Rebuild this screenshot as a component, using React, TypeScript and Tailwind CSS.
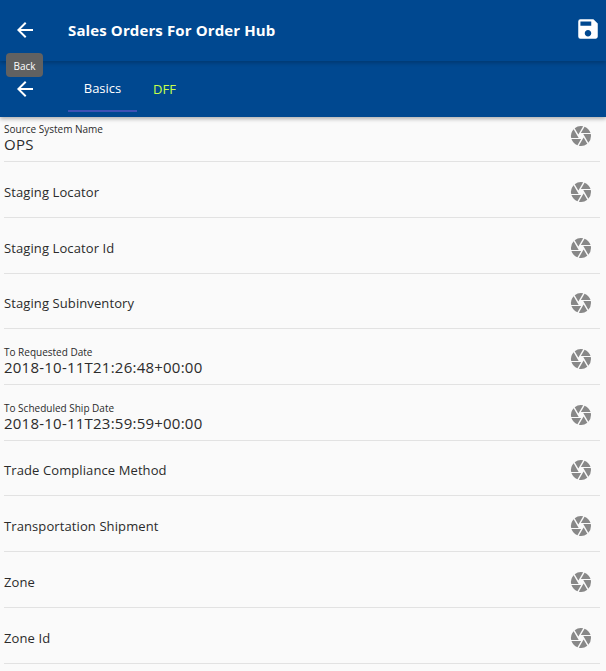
import { MdArrowBack, MdSave, MdCamera } from "react-icons/md";

const rows: { label: string; value?: string; h: string }[] = [
  { label: "Source System Name", value: "OPS", h: "h-[45px] pb-[7px]" },
  { label: "Staging Locator", h: "h-[56px] pt-[4px]" },
  { label: "Staging Locator Id", h: "h-[56px] pt-[4px]" },
  { label: "Staging Subinventory", h: "h-[55px] pt-[4px]" },
  { label: "To Requested Date", value: "2018-10-11T21:26:48+00:00", h: "h-[56px] pt-[4px]" },
  { label: "To Scheduled Ship Date", value: "2018-10-11T23:59:59+00:00", h: "h-[56px] pt-[4px]" },
  { label: "Trade Compliance Method", h: "h-[55px] pt-[4px]" },
  { label: "Transportation Shipment", h: "h-[56px] pt-[4px]" },
  { label: "Zone", h: "h-[56px] pt-[4px]" },
  { label: "Zone Id", h: "h-[56px] pt-[4px]" },
];

export default function App() {
  return (
    <div className="relative w-[606px] h-[671px] overflow-hidden bg-[#fafafa] font-['Open_Sans','Noto_Sans',sans-serif] text-[#2b2b2b]">
      <header className="relative z-10 bg-[#004890] shadow-[0_2px_4px_rgba(0,0,0,0.3)]">
        <div className="h-[61px] flex items-center pl-[13px] pr-[5px] shadow-[0_2px_4px_rgba(0,0,0,0.22)]">
          <MdArrowBack size={24} color="#fff" className="mb-[2px]" />
          <h1 className="ml-[31px] text-[15px] tracking-[0.12px] font-bold text-white flex-1">Sales Orders For Order Hub</h1>
          <MdSave size={26} color="#fff" className="mb-[4px]" />
        </div>
        <div className="h-[56px] flex pl-[13px]">
          <div className="flex items-center h-[56px]">
            <MdArrowBack size={24} color="#fff" />
          </div>
          <div className="ml-[31px] w-[69px] h-[51px] pt-[7px] flex items-center justify-center border-b-2 border-[#3f51b5] text-[13px] text-white">Basics</div>
          <div className="ml-[16px] h-[56px] pt-[2px] flex items-center text-[13px] text-[#c6ff4a]">DFF</div>
        </div>
      </header>

      <div className="absolute left-[6px] top-[53px] z-20 w-[37px] h-[24px] pt-[2px] rounded-[4px] bg-[#616161] text-white text-[10px] flex items-center justify-center">Back</div>

      <main>
        {rows.map((r) => (
          <div key={r.label} className={`${r.h} ml-[4px] mr-[6px] flex items-center border-b border-[#e2e2e2]`}>
            <div className="flex-1 min-w-0">
              {r.value ? (
                <div className="pt-[4px]">
                  <div className="text-[10px] leading-[12px]">{r.label}</div>
                  <div className="text-[15px] leading-[18px] tracking-[0.23px]">{r.value}</div>
                </div>
              ) : (
                <div className="text-[13px] leading-[18px] tracking-[0.1px]">{r.label}</div>
              )}
            </div>
            <MdCamera size={24} color="#888" className="mr-[7px]" />
          </div>
        ))}
      </main>
    </div>
  );
}
